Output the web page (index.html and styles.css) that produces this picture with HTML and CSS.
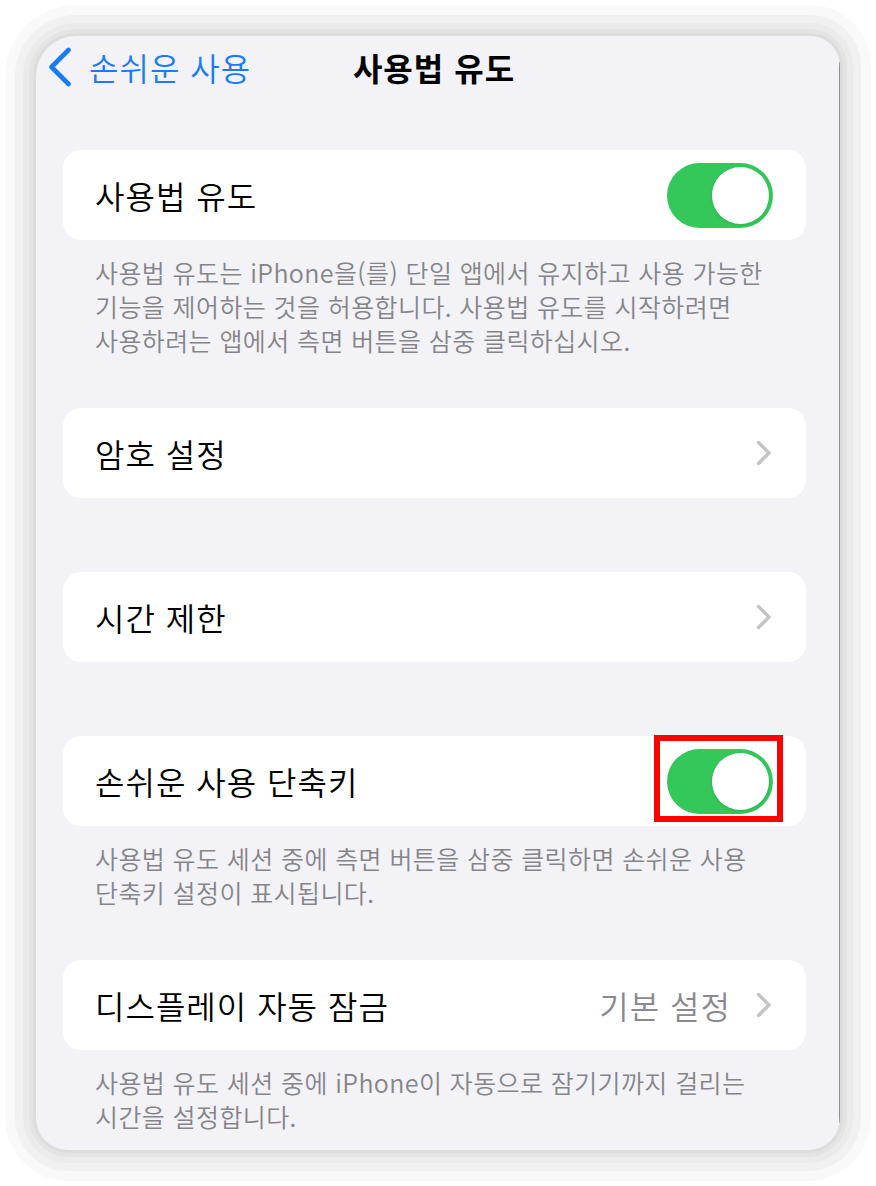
FILE: index.html
```html
<!DOCTYPE html>
<html lang="ko">
<head>
<meta charset="utf-8">
<title>사용법 유도</title>
<link rel="stylesheet" href="styles.css">
</head>
<body>
<div class="page">
  <div class="screen">
    <header class="nav">
      <a class="back">
        <svg class="back-chev" width="24" height="40" viewBox="0 0 24 40"><path d="M20.5 3 L3.5 20 L20.5 37" fill="none" stroke="#1a7cf5" stroke-width="4.6" stroke-linecap="round" stroke-linejoin="round"/></svg>
        <span class="back-text">손쉬운 사용</span>
      </a>
      <h1 class="title">사용법 유도</h1>
      <div class="nav-spacer"></div>
    </header>

    <main class="list">
      <section class="group">
        <div class="cell">
          <span class="label">사용법 유도</span>
          <span class="switch"><span class="knob"></span></span>
        </div>
        <p class="footer">사용법 유도는 iPhone을(를) 단일 앱에서 유지하고 사용 가능한<br>기능을 제어하는 것을 허용합니다. 사용법 유도를 시작하려면<br>사용하려는 앱에서 측면 버튼을 삼중 클릭하십시오.</p>
      </section>

      <section class="group group-empty">
        <div class="cell">
          <span class="label">암호 설정</span>
          <svg class="chev" width="16" height="26" viewBox="0 0 16 26"><path d="M2.5 2.5 L13 13 L2.5 23.5" fill="none" stroke="#c4c4c7" stroke-width="3.4" stroke-linecap="round" stroke-linejoin="round"/></svg>
        </div>
      </section>

      <section class="group group-empty">
        <div class="cell">
          <span class="label">시간 제한</span>
          <svg class="chev" width="16" height="26" viewBox="0 0 16 26"><path d="M2.5 2.5 L13 13 L2.5 23.5" fill="none" stroke="#c4c4c7" stroke-width="3.4" stroke-linecap="round" stroke-linejoin="round"/></svg>
        </div>
      </section>

      <section class="group">
        <div class="cell">
          <span class="label">손쉬운 사용 단축키</span>
          <span class="switch highlighted"><span class="knob"></span></span>
        </div>
        <p class="footer">사용법 유도 세션 중에 측면 버튼을 삼중 클릭하면 손쉬운 사용<br>단축키 설정이 표시됩니다.</p>
      </section>

      <section class="group">
        <div class="cell">
          <span class="label">디스플레이 자동 잠금</span>
          <span class="trail">
            <span class="value">기본 설정</span>
            <svg class="chev" width="16" height="26" viewBox="0 0 16 26"><path d="M2.5 2.5 L13 13 L2.5 23.5" fill="none" stroke="#c4c4c7" stroke-width="3.4" stroke-linecap="round" stroke-linejoin="round"/></svg>
          </span>
        </div>
        <p class="footer">사용법 유도 세션 중에 iPhone이 자동으로 잠기기까지 걸리는<br>시간을 설정합니다.</p>
      </section>
    </main>
  </div>
</div>
</body>
</html>
```

FILE: styles.css
```css
* { box-sizing: border-box; }

html, body {
  margin: 0;
  padding: 0;
  background: #ffffff;
}

body {
  font-family: "Noto Sans CJK KR", "Noto Sans", sans-serif;
  font-weight: 350;
  width: 876px;
  height: 1186px;
  overflow: hidden;
}

.page {
  padding: 36px;
  width: 876px;
  height: 1186px;
}

.screen {
  position: relative;
  width: 804px;
  height: 1114px;
  background: #f2f2f7;
  border-radius: 40px 30px 32px 32px;
  box-shadow:
    0 0 0 3px #dddddd,
    0 0 0 7px #e4e4e4,
    0 0 0 13px #ebebeb,
    0 0 0 21px #f1f1f1,
    0 0 0 31px #f9f9f9;
  overflow: hidden;
}

.screen::after {
  content: "";
  position: absolute;
  right: 0;
  top: 26px;
  bottom: 27px;
  width: 1px;
  background: #8f8f8f;
}

/* Navigation bar */
.nav {
  height: 62px;
  display: grid;
  grid-template-columns: 1fr auto 1fr;
  align-items: center;
  padding: 0 20px 0 12px;
}

.back {
  display: flex;
  align-items: center;
  gap: 17px;
  color: #1a7cf5;
}

.back-chev { display: block; }

.back-text {
  font-size: 32px;
  letter-spacing: 1px;
  line-height: 40px;
  color: #1a7cf5;
}

.title {
  margin: 0;
  font-size: 32px;
  letter-spacing: 1px;
  font-weight: 700;
  line-height: 40px;
  color: #000;
}

/* List */
.list {
  display: flex;
  flex-direction: column;
  gap: 51px;
  margin: 52px 34px 0 27px;
}

.group-empty { padding-bottom: 23px; }

.cell {
  height: 90px;
  background: #ffffff;
  border-radius: 18px;
  display: flex;
  align-items: center;
  justify-content: space-between;
  padding: 0 33px 0 32px;
}

.label {
  font-size: 32px;
  letter-spacing: 1px;
  line-height: 40px;
  color: #000;
}

.trail {
  display: flex;
  align-items: center;
  gap: 25px;
}

.value {
  font-size: 32px;
  letter-spacing: 1px;
  line-height: 40px;
  color: #8a8a8e;
}

.chev {
  display: block;
  margin-right: 1px;
}

.footer {
  margin: 0;
  padding: 15px 32px 0;
  font-size: 25px;
  letter-spacing: 0.4px;
  line-height: 34px;
  color: #858589;
}

/* Switch */
.switch {
  position: relative;
  width: 106px;
  height: 65px;
  border-radius: 33px;
  background: #34c759;
  display: flex;
  align-items: center;
  justify-content: flex-end;
  padding: 4px;
}

.knob {
  width: 57px;
  height: 57px;
  border-radius: 50%;
  background: #ffffff;
  box-shadow: 0 1px 3px rgba(0, 0, 0, 0.12);
}

.highlighted::after {
  content: "";
  position: absolute;
  top: -14px;
  left: -13px;
  right: -10px;
  bottom: -8px;
  border: 6px solid #ff0000;
}
```
